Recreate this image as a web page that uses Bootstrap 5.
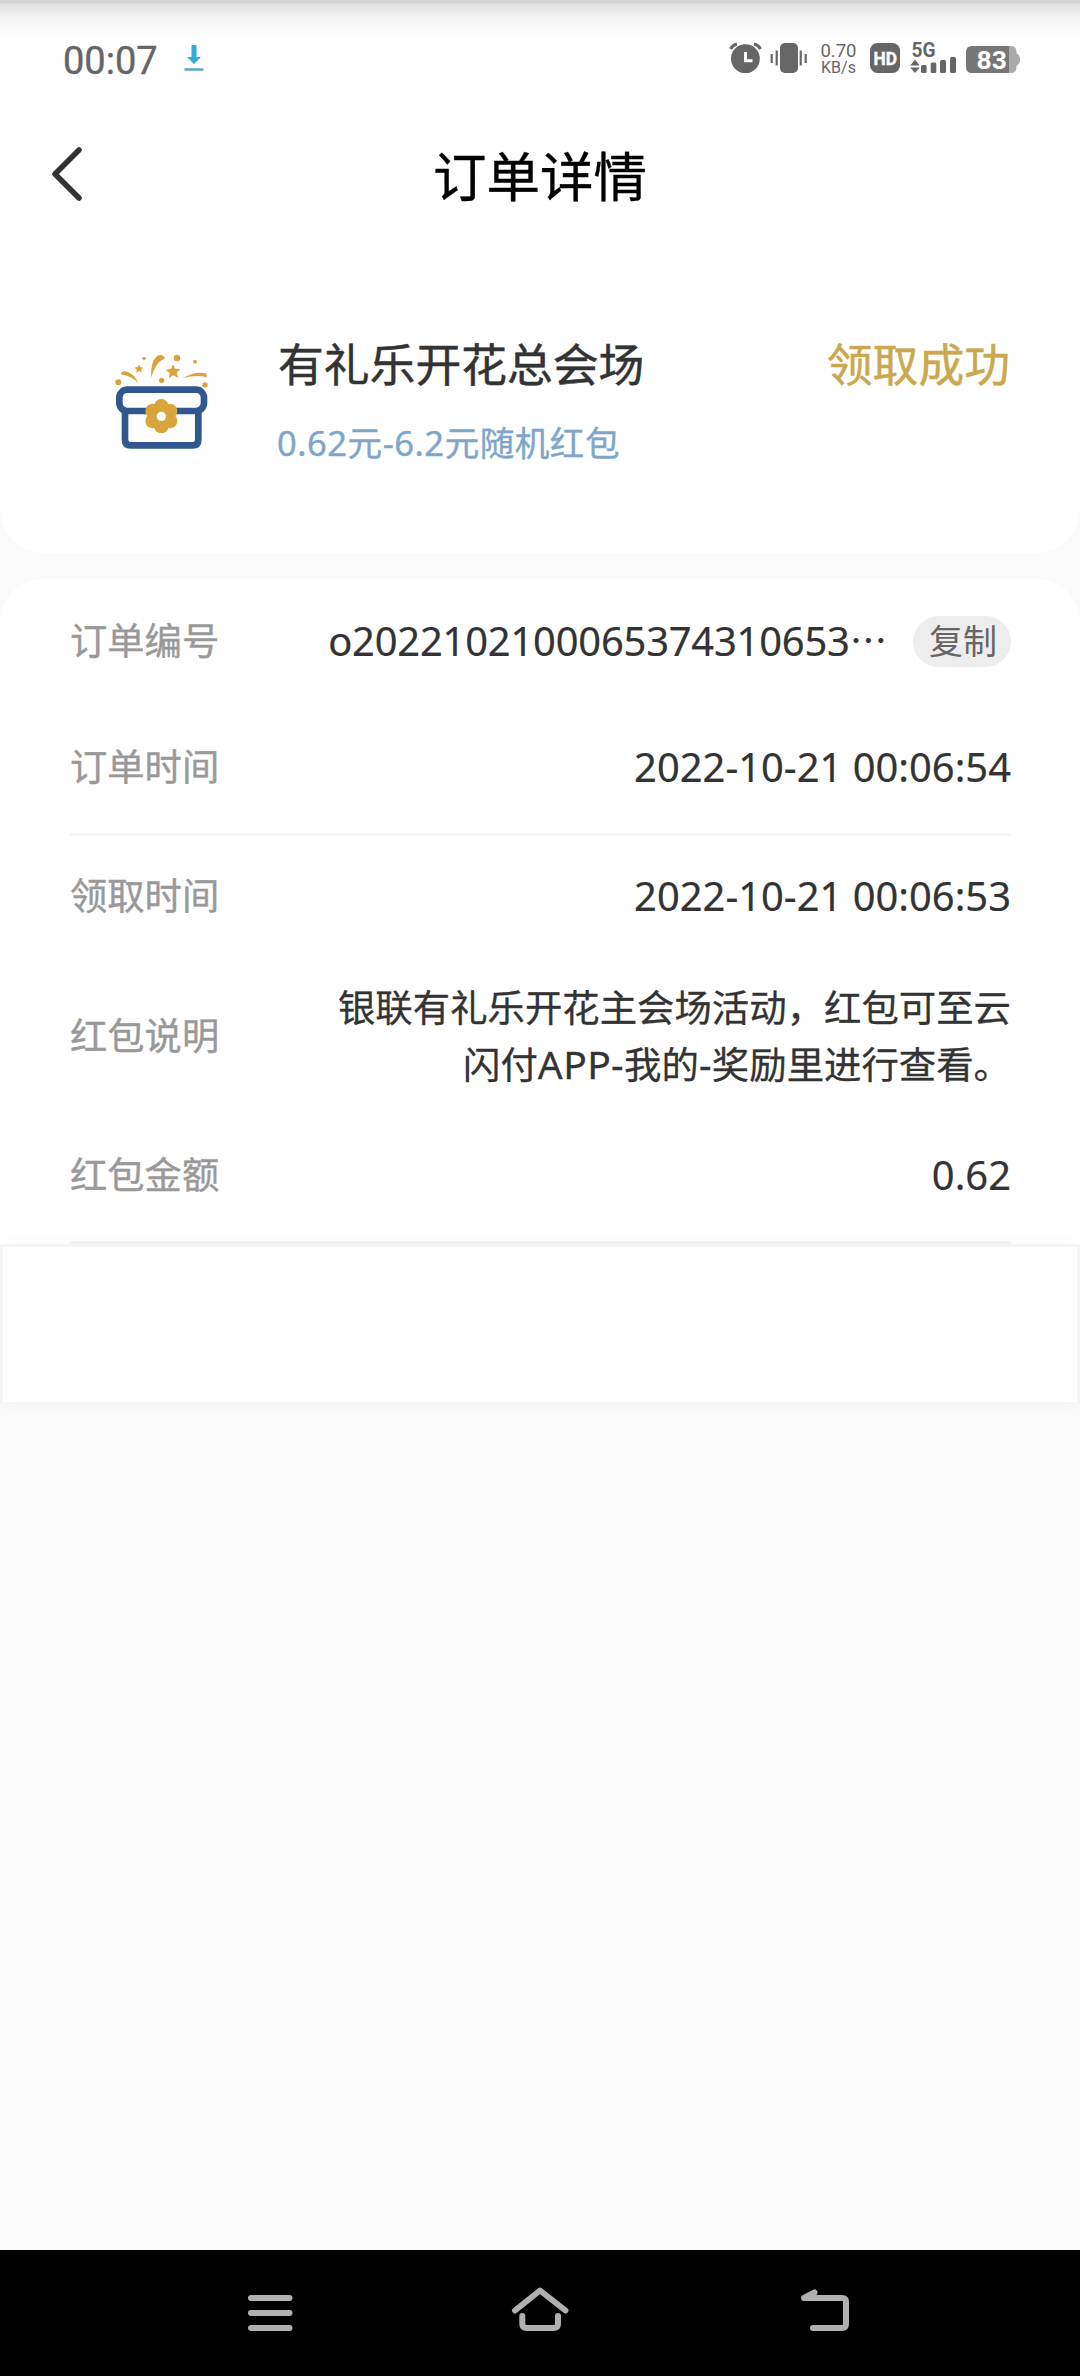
<!DOCTYPE html>
<html lang="zh-CN">
<head>
<meta charset="utf-8">
<meta name="viewport" content="width=device-width, initial-scale=1">
<title>订单详情</title>
<link href="https://cdn.jsdelivr.net/npm/bootstrap@5.3.0/dist/css/bootstrap.min.css" rel="stylesheet">
<style>
  body { font-family: "Noto Sans", "Noto Sans CJK SC", sans-serif; background: #fafafa; color: #333; line-height: 1; }
  .screen { width: 1080px; height: 2376px; }
  .statusbar { height: 118px; padding: 0 58px 0 63px; background: linear-gradient(#d4d4d4 0 3px, #e2e2e2 4px, #f4f4f4 18px, #fff 40px); color: #666; }
  .clock { font: 38px/1 Roboto, sans-serif; padding-top: 3px; -webkit-text-stroke: .4px; }
  .dl-icon { margin-left: 25px; margin-bottom: 2px; }
  .titlebar { height: 116px; padding-left: 48px; }
  .page-title { font: 400 53.5px/1 "Noto Sans CJK SC", sans-serif; color: #000; margin-right: 83px; padding-bottom: 5px; -webkit-text-stroke: .4px; }
  .summary { height: 319px; padding: 96px 71px 0 90px; border-radius: 0 0 44px 44px; }
  .sum-name { font-size: 45.8px; line-height: 60px; margin-top: 4px; -webkit-text-stroke: .5px; }
  .sum-note { font-size: 34.6px; line-height: 50px; margin-top: 24px; margin-left: -1px; color: #7fa6c9; letter-spacing: .5px; -webkit-text-stroke: .4px; }
  .sum-state { font-size: 45.8px; line-height: 60px; margin-top: 4px; margin-right: -1px; color: #cba74d; -webkit-text-stroke: .5px; }
  .details { margin-top: 26px; padding: 0 69px 0 70px; border-radius: 44px 44px 0 0; }
  .item { font-size: 37.3px; }
  .item-key { color: #999; -webkit-text-stroke: .4px; }
  .digits { font-size: 39.9px; -webkit-text-stroke: .2px; }
  .order-no { letter-spacing: -.2px; }
  .desc { width: 690px; line-height: 56px; font-size: 37.4px; -webkit-text-stroke: .3px; }
  .latin { font-size: 39px; letter-spacing: .4px; }
  .h1st { height: 124px; } .h2nd { height: 130px; padding-bottom: 2px; } .h3rd { height: 120px; } .h4th { height: 160px; } .h5th { height: 118px; margin-bottom: 7px; }
  .rule { height: 3px; background: #f5f5f5; }
  .rule-end { height: 3px; }
  .copy-btn { width: 98px; height: 51px; margin-left: 26px; padding-left: 2px; font-size: 34px; line-height: 1; background: #ededed; color: #666; border: 0; }
  .panel { height: 160px; border: 3px solid #f5f5f5; border-bottom-width: 2px; box-shadow: 0 0 14px rgba(0,0,0,.035); }
  .sysnav { height: 126px; background: #000; }
</style>
<script src="https://cdn.jsdelivr.net/npm/bootstrap@5.3.0/dist/js/bootstrap.bundle.min.js"></script>
</head>
<body>
<div class="screen d-flex flex-column overflow-hidden">
  <header class="bg-white">
    <div class="statusbar d-flex align-items-center justify-content-between">
      <div class="d-flex align-items-center">
        <span class="clock">00:07</span>
        <svg class="dl-icon" width="22" height="28" viewBox="0 0 22 28"><path d="M8.500 1h5v12h4.500L11 20 4 13h4.500z" fill="#2eadd9"/><path d="M1.500 25.500h19" stroke="#4aa6c2" stroke-width="2.300"/></svg>
      </div>
      <!-- alarm, vibration, network speed, HD, 5G signal, battery -->
      <svg width="296" height="56" viewBox="726 31 296 56" fill="#666">
        <circle cx="745.400" cy="58.700" r="14.400"/>
        <path d="M730.500 49q2-4 6.500-5M760.500 49q-2-4-6.500-5" fill="none" stroke="#666" stroke-width="3"/>
        <path d="M745.500 52v8.700h7" fill="none" stroke="#fff" stroke-width="3"/>
        <rect x="780" y="43" width="18" height="30" rx="5"/>
        <path d="M771.700 54v9M776.700 50.500v15M800.700 50.500v15M805.700 54v9" stroke="#666" stroke-width="2.200"/>
        <text x="820.500" y="57" font-family="Roboto, sans-serif" font-size="18.500" textLength="36">0.70</text>
        <text x="821" y="72.800" font-family="Roboto, sans-serif" font-size="16" textLength="35">KB/s</text>
        <rect x="870" y="43" width="30" height="30" rx="7.500"/>
        <text x="873.500" y="65" font-family="Roboto, sans-serif" font-weight="700" font-size="19" textLength="23.500" lengthAdjust="spacingAndGlyphs" fill="#fff" stroke="#fff" stroke-width=".4">HD</text>
        <text x="911.500" y="57" font-family="Roboto, sans-serif" font-weight="700" font-size="19.500" textLength="24" lengthAdjust="spacingAndGlyphs">5G</text>
        <path d="M915 59.500l4.700 6h-9.400zM915 73l4.700-5.500h-9.400z"/>
        <rect x="921" y="65" width="5.600" height="8" rx="1.500"/><rect x="930.700" y="62.500" width="5.600" height="10.500" rx="1.500"/><rect x="940" y="60" width="6" height="13" rx="1.500"/><rect x="950" y="57" width="6" height="16" rx="1.500"/>
        <path d="M1008 46h3q5.500 0 5.500 6v1.500q3.500 1 3.500 6t-3.500 6V67q0 6-5.500 6h-3z" fill="#aaa"/>
        <path d="M972 46h37v27h-37q-6 0-6-6V52q0-6 6-6z" fill="#777"/>
        <text x="976.500" y="69" font-family="Roboto, sans-serif" font-weight="700" font-size="26.500" textLength="30.500" fill="#fff">83</text>
      </svg>
    </div>
    <div class="titlebar d-flex align-items-center">
      <svg width="35" height="60" viewBox="0 0 35 60"><path d="M31 4 7 28 31 52" fill="none" stroke="#333" stroke-width="5.500" stroke-linecap="round" stroke-linejoin="round"/></svg>
      <h1 class="page-title mb-0 flex-grow-1 text-center">订单详情</h1>
    </div>
  </header>

  <main class="flex-grow-1">
    <section class="summary bg-white d-flex align-items-start">
      <svg class="flex-shrink-0" width="140" height="140" viewBox="0 0 420 420">
        <g fill="none" stroke="#30588f" stroke-width="20">
          <rect x="88" y="179" width="254" height="64" rx="24"/>
          <path d="M105 243v86q0 17 17 17h186q17 0 17-17v-86"/>
        </g>
        <g fill="#d9a43b">
          <circle cx="214" cy="229" r="22"/><circle cx="214" cy="288" r="22"/>
          <circle cx="188" cy="243" r="22"/><circle cx="240" cy="243" r="22"/>
          <circle cx="188" cy="273" r="22"/><circle cx="240" cy="273" r="22"/>
          <circle cx="214" cy="259" r="28"/>
          <circle cx="85" cy="157" r="9"/><circle cx="162" cy="85" r="5"/><circle cx="261" cy="84" r="10"/><circle cx="315" cy="95" r="6"/><circle cx="215" cy="151" r="8"/><circle cx="345" cy="165" r="8"/>
          <path d="M92 133q3-11 15-9 27 8 38 36-17-21-53-27z"/>
          <path d="M183 143q-2-47 18-65 12-8 23 3 1 8-9 9-19 12-32 53z"/>
          <path d="M279 145q32-22 70-15l1 12q-33-9-71 3z"/>
          <path d="M249 103l6 13 16 1-11 11 5 15-15-7-13 9 2-16-12-9 16-4z"/>
          <path d="M147 103l4 9 9 1-7 6 2 9-8-5-8 5 1-10-7-5 10-2z"/>
        </g>
        <circle cx="214" cy="259" r="14" fill="#fff"/>
      </svg>
      <div class="ms-5 flex-grow-1">
        <div class="sum-name">有礼乐开花总会场</div>
        <div class="sum-note">0.62元-6.2元随机红包</div>
      </div>
      <div class="sum-state">领取成功</div>
    </section>

    <section class="details bg-white">
      <div class="item h1st d-flex align-items-center justify-content-between">
        <span class="item-key">订单编号</span>
        <div class="d-flex align-items-center">
          <span class="digits order-no">o2022102100065374310653</span><span class="dots">⋯</span>
          <button class="copy-btn rounded-pill py-0 pe-0" type="button">复制</button>
        </div>
      </div>
      <div class="item h2nd d-flex align-items-center justify-content-between">
        <span class="item-key">订单时间</span><span class="digits">2022-10-21 00:06:54</span>
      </div>
      <div class="rule"></div>
      <div class="item h3rd d-flex align-items-center justify-content-between">
        <span class="item-key">领取时间</span><span class="digits">2022-10-21 00:06:53</span>
      </div>
      <div class="item h4th d-flex align-items-center justify-content-between">
        <span class="item-key">红包说明</span>
        <div class="desc text-end">银联有礼乐开花主会场活动，红包可至云<br>闪付<span class="latin">APP-</span>我的<span class="latin">-</span>奖励里进行查看。</div>
      </div>
      <div class="item h5th d-flex align-items-center justify-content-between">
        <span class="item-key">红包金额</span><span class="digits">0.62</span>
      </div>
      <div class="rule rule-end"></div>
    </section>
    <div class="panel bg-white"></div>
  </main>

  <nav class="sysnav flex-shrink-0">
    <svg class="d-block" width="1080" height="126" viewBox="0 2250 1080 126" fill="none" stroke="#b0b0b0" stroke-width="6" stroke-linecap="round" stroke-linejoin="round">
      <path d="M251 2298h38.500M251 2313h38.500M251 2328h38.500"/>
      <path d="M515 2310.500l25-20 25.500 20M522.300 2316v8q0 4 4.500 4h26.500q4.700 0 4.700-4v-8"/>
      <path d="M814.500 2292.500l-10.500 5.500h38q4 0 4 4v22q0 4-4 4h-29"/>
    </svg>
  </nav>
</div>
</body>
</html>
